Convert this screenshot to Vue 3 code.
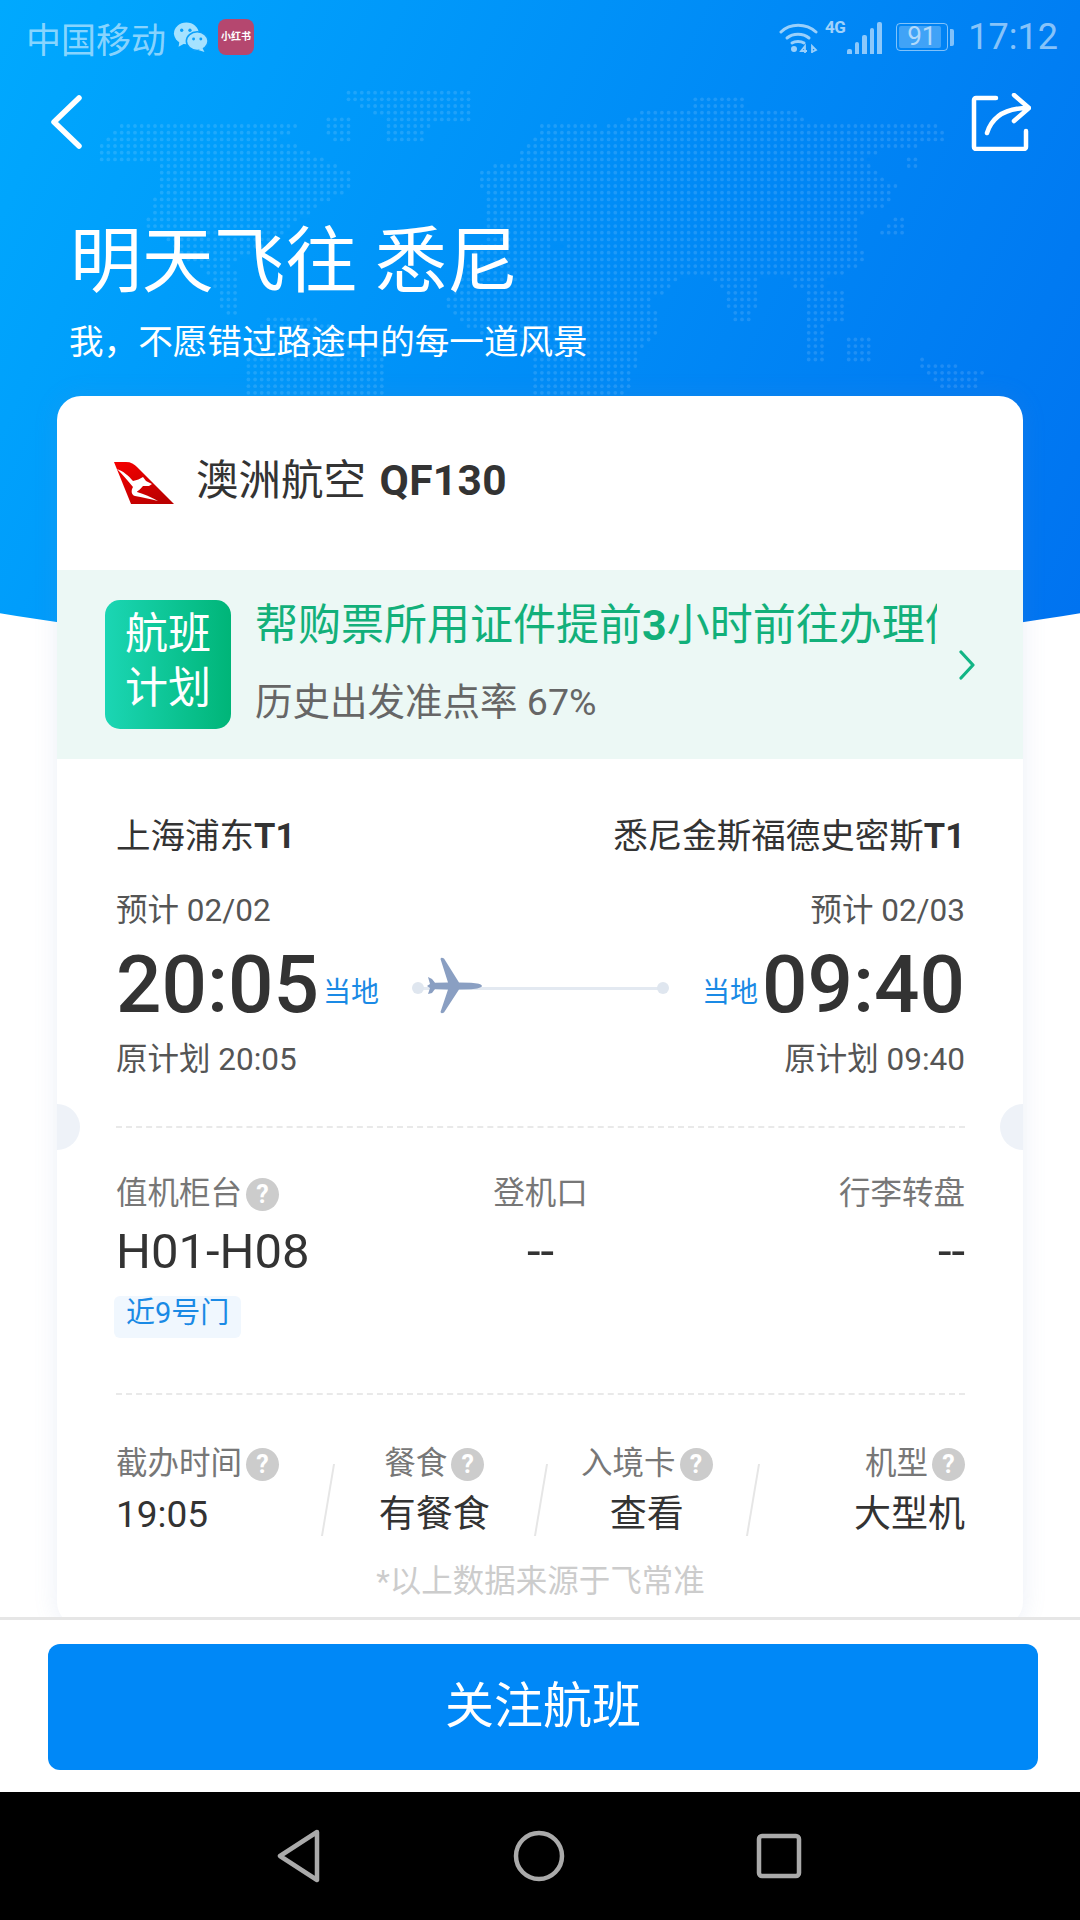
<template>
  <div class="page">
    <main class="main">
      <div class="hero-bg">
        <svg class="world" width="1080" height="400" viewBox="0 0 1080 400">
          <circle v-for="(d, i) in mapDots" :key="i" :cx="d[0]" :cy="d[1]" r="1.9" fill="#fff" fill-opacity="0.12" />
        </svg>
      </div>

      <div class="status">
        <div class="status-left">
          <span class="carrier">中国移动</span>
          <svg class="wechat" width="36" height="31" viewBox="0 0 34 30">
            <ellipse cx="12.5" cy="11" rx="12" ry="10.5" fill="#a5e2ff" />
            <path d="M6 18l-1 6 7-4z" fill="#a5e2ff" />
            <ellipse cx="23" cy="18.5" rx="10.5" ry="9" fill="#a5e2ff" stroke="#0aa0fb" stroke-width="1.5" />
            <path d="M28 25l2 4-6-2z" fill="#a5e2ff" />
            <circle cx="8" cy="8" r="1.6" fill="#0aa0fb" /><circle cx="16" cy="8" r="1.6" fill="#0aa0fb" />
            <circle cx="19.5" cy="16.5" r="1.4" fill="#0aa0fb" /><circle cx="26.5" cy="16.5" r="1.4" fill="#0aa0fb" />
          </svg>
          <span class="xhs">小红书</span>
        </div>
        <div class="status-right">
          <svg class="wifi" width="40" height="34" viewBox="0 0 40 34">
            <g fill="none" stroke="#fff" stroke-opacity="0.6" stroke-width="3" stroke-linecap="round">
              <path d="M2 12C11 3 27 3 37 12" /><path d="M8 18c6-5 16-5 22 0" /><path d="M13 23c3-2 9-2 12 0" />
            </g>
            <circle cx="15" cy="29" r="3" fill="#fff" fill-opacity="0.6" />
            <path d="M26 33v-7l-4 5h6M33 33v-7l4 4-4 2" fill="none" stroke="#fff" stroke-opacity="0.6" stroke-width="1.8" />
          </svg>
          <div class="signal">
            <span class="net">4G</span>
            <i v-for="h in signalBars" :key="h" class="bar" :style="{ height: h + 'px' }"></i>
          </div>
          <div class="battery">
            <div class="battery-box"><div class="battery-fill"></div><span class="battery-num">91</span></div>
            <i class="battery-knob"></i>
          </div>
          <span class="clock">17:12</span>
        </div>
      </div>

      <nav class="topnav">
        <svg width="34" height="56" viewBox="0 0 34 56">
          <path d="M30 4L5 28l25 24" fill="none" stroke="#fff" stroke-width="5.5" stroke-linecap="round" stroke-linejoin="round" />
        </svg>
        <svg width="60" height="58" viewBox="0 0 60 58">
          <path d="M25 5H5a2 2 0 0 0-2 2v47a2 2 0 0 0 2 2h48a2 2 0 0 0 2-2V38" fill="none" stroke="#fff" stroke-width="4.5" stroke-linecap="round" />
          <path d="M16 40C21 24 34 15 57 15M43 2l15 13-15 13" fill="none" stroke="#fff" stroke-width="4.5" stroke-linecap="round" stroke-linejoin="round" />
        </svg>
      </nav>

      <h1 class="title">明天飞往 悉尼</h1>
      <p class="subtitle">我，不愿错过路途中的每一道风景</p>

      <section class="card">
        <div class="airline">
          <svg width="62" height="44" viewBox="0 0 62 44">
            <defs>
              <linearGradient id="tail" x1="0" y1="0" x2="0.7" y2="1">
                <stop offset="0" stop-color="#f60000" />
                <stop offset="1" stop-color="#bb0000" />
              </linearGradient>
            </defs>
            <path d="M1 1h12c5 0 8 2 11 5l37 37H18z" fill="url(#tail)" />
            <path d="M4 8C10 10 16 15 20 20 24 19 27 18 30 16L33 20 39 23 36 25 30 25C27 29 24 30 24 31 31 33 38 36 45 40 37 38 29 36 22 35 18 34 18 29 20 26 15 20 10 14 4 8Z" fill="#fff" />
          </svg>
          <span class="airline-name">澳洲航空 <b>QF130</b></span>
        </div>

        <div class="plan">
          <div class="plan-tag">航班<br />计划</div>
          <div class="plan-text">
            <div class="plan-tip">帮购票所用证件提前<b>3</b>小时前往办理值机手续</div>
            <div class="plan-rate">历史出发准点率 67%</div>
          </div>
          <svg class="plan-arrow" width="16" height="30" viewBox="0 0 16 30">
            <path d="M2 2l12 13L2 28" fill="none" stroke="#12b585" stroke-width="3.2" stroke-linecap="round" stroke-linejoin="round" />
          </svg>
        </div>

        <div class="body">
          <div class="section flight">
            <div class="between route">
              <span>上海浦东<b>T1</b></span>
              <span>悉尼金斯福德史密斯<b>T1</b></span>
            </div>
            <div class="between expect">
              <span>预计 02/02</span>
              <span>预计 02/03</span>
            </div>
            <div class="times">
              <span class="time">20:05</span>
              <span class="local">当地</span>
              <div class="track">
                <svg class="plane" width="56" height="58" viewBox="0 0 56 58">
                  <path d="M55 29C55 27.5 50 26 44 25.8L32 25.5 17 1.5Q14 0 13.5 2L21 25.5 8 25.8 5 22 1 20 3 27 0 29 3 31 1 37 5 36 8 32 21 32.5 13.5 55Q14 57 17 55.5L32 32.5 44 32.2C50 32 55 30.5 55 29Z" fill="#8a9fc2" />
                </svg>
              </div>
              <span class="local">当地</span>
              <span class="time">09:40</span>
            </div>
            <div class="between planned">
              <span>原计划 20:05</span>
              <span>原计划 09:40</span>
            </div>
            <i class="notch notch-l"></i>
            <i class="notch notch-r"></i>
          </div>

          <div class="section counters">
            <div class="counter-col">
              <div class="label">值机柜台<span class="help">?</span></div>
              <div class="big">H01-H08</div>
              <span class="gate-tag">近9号门</span>
            </div>
            <div class="counter-col center">
              <div class="label">登机口</div>
              <div class="big">--</div>
            </div>
            <div class="counter-col right">
              <div class="label">行李转盘</div>
              <div class="big">--</div>
            </div>
          </div>

          <div class="facts">
            <template v-for="(f, i) in facts" :key="f.label">
              <i v-if="i > 0" class="slash"></i>
              <div class="fact" :class="f.align">
                <div class="label">{{ f.label }}<span class="help">?</span></div>
                <div class="fact-value">{{ f.value }}</div>
              </div>
            </template>
          </div>

          <p class="source">*以上数据来源于飞常准</p>
        </div>
      </section>
    </main>

    <footer class="footer">
      <button class="follow">关注航班</button>
    </footer>

    <div class="sysnav">
      <svg width="46" height="54" viewBox="0 0 46 54">
        <path d="M41 3L4 27l37 24z" fill="none" stroke="#aaa" stroke-width="4.5" stroke-linejoin="round" />
      </svg>
      <svg width="52" height="52" viewBox="0 0 52 52">
        <circle cx="26" cy="26" r="23" fill="none" stroke="#aaa" stroke-width="4.5" />
      </svg>
      <svg width="46" height="46" viewBox="0 0 46 46">
        <rect x="3" y="3" width="40" height="40" rx="3" fill="none" stroke="#aaa" stroke-width="4.5" />
      </svg>
    </div>
  </div>
</template>

<script setup>
const signalBars = [5, 12, 19, 26, 32]

const facts = [
  { label: '截办时间', value: '19:05', align: 'left' },
  { label: '餐食', value: '有餐食', align: 'center' },
  { label: '入境卡', value: '查看', align: 'center' },
  { label: '机型', value: '大型机', align: 'right' }
]

// rough continents, dots are laid on a grid inside them
const lands = [
  [[98,143],[129,120],[300,120],[294,130],[274,140],[310,150],[356,175],[351,190],[320,205],[294,225],[279,240],[232,262],[240,290],[222,285],[181,255],[145,225],[155,195],[160,160],[98,160]],
  [[344,87],[470,87],[470,120],[434,120],[420,146],[385,146],[385,120],[344,100]],
  [[325,115],[354,115],[354,145],[330,145]],
  [[212,280],[238,285],[238,320],[222,310]],
  [[268,313],[307,313],[387,355],[387,396],[248,396],[248,350]],
  [[485,215],[480,170],[516,160],[529,142],[545,122],[592,122],[602,128],[630,118],[643,112],[695,112],[695,96],[742,96],[747,112],[799,112],[809,120],[938,125],[949,135],[943,142],[892,150],[864,155],[871,170],[897,185],[887,205],[861,215],[857,240],[867,258],[845,275],[825,275],[823,292],[792,292],[789,275],[762,275],[754,320],[733,325],[718,280],[684,275],[658,270],[540,240],[485,240]],
  [[444,300],[485,235],[643,260],[684,275],[653,300],[662,330],[643,350],[625,396],[535,396],[527,345],[465,330]],
  [[806,290],[843,290],[843,320],[806,320]],
  [[806,325],[825,325],[825,365],[806,365]],
  [[845,335],[870,335],[875,365],[845,365]],
  [[915,357],[985,372],[975,392],[935,385]],
  [[905,155],[922,155],[922,170],[905,170]],
  [[895,215],[905,215],[905,235],[880,235]]
]

const inside = (x, y, poly) => {
  let hit = false
  for (let i = 0, j = poly.length - 1; i < poly.length; j = i++) {
    const [xi, yi] = poly[i]
    const [xj, yj] = poly[j]
    if ((yi > y) !== (yj > y) && x < ((xj - xi) * (y - yi)) / (yj - yi) + xi) hit = !hit
  }
  return hit
}

const mapDots = []
for (let y = 86; y < 398; y += 6.67) {
  for (let x = 95; x < 990; x += 6.67) {
    if (lands.some((p) => inside(x, y, p))) mapDots.push([x.toFixed(1), y.toFixed(1)])
  }
}
</script>

<style scoped>
.page {
  width: 1080px;
  height: 1920px;
  display: flex;
  flex-direction: column;
  overflow: hidden;
  background: #fff;
  font-family: Roboto, "Noto Sans CJK SC", sans-serif;
  color: #333;
}

.main {
  position: relative;
  height: 1617px;
  overflow: hidden;
}

.hero-bg {
  position: absolute;
  top: 0;
  left: 0;
  width: 1080px;
  height: 660px;
  background: linear-gradient(115deg, #00a9fe 0%, #0072f0 100%);
  clip-path: ellipse(1504px 657px at 540px 0);
}

.world {
  position: absolute;
  top: 0;
  left: 0;
}

.status,
.topnav,
.title,
.subtitle,
.card {
  position: relative;
}

.status {
  height: 74px;
  display: flex;
  justify-content: space-between;
  align-items: center;
  padding: 0 22px 0 26px;
  color: rgba(255, 255, 255, 0.55);
}

.status-left,
.status-right {
  display: flex;
  align-items: center;
}

.carrier {
  font-size: 35px;
}

.wechat {
  margin-left: 7px;
}

.xhs {
  width: 36px;
  height: 36px;
  margin-left: 9px;
  border-radius: 8px;
  background: #b5476f;
  color: #fff;
  font-size: 10px;
  font-weight: 700;
  line-height: 36px;
  text-align: center;
  white-space: nowrap;
}

.signal {
  display: flex;
  align-items: flex-end;
  gap: 3px;
  height: 34px;
  margin-left: 6.5px;
}

.net {
  align-self: flex-start;
  font-size: 17px;
  font-weight: 700;
  line-height: 15px;
  letter-spacing: -0.5px;
  margin-right: -1px;
  color: rgba(255, 255, 255, 0.65);
}

.bar {
  width: 4.5px;
  background: rgba(255, 255, 255, 0.55);
  border-radius: 2px 2px 0 0;
}

.battery {
  display: flex;
  align-items: center;
  margin-left: 14px;
}

.battery-box {
  position: relative;
  width: 52px;
  height: 28px;
  box-sizing: border-box;
  padding: 2px;
  border: 1.5px solid rgba(255, 255, 255, 0.5);
  border-radius: 4px;
  display: flex;
}

.battery-fill {
  width: 91%;
  background: rgba(255, 255, 255, 0.25);
  border-radius: 2px;
}

.battery-num {
  position: absolute;
  inset: 0;
  text-align: center;
  font-size: 26px;
  line-height: 25px;
  color: rgba(255, 255, 255, 0.6);
}

.battery-knob {
  width: 4px;
  height: 17px;
  margin-left: 2px;
  background: rgba(255, 255, 255, 0.5);
  border-radius: 0 2px 2px 0;
}

.clock {
  margin-left: 14.5px;
  font-size: 36px;
}

.topnav {
  height: 96px;
  display: flex;
  justify-content: space-between;
  align-items: center;
  padding: 0 49px 0 49px;
  margin-bottom: 47px;
}

.title {
  margin: 0 0 10px 70px;
  font-size: 71.8px;
  font-weight: 400;
  line-height: 90px;
  color: #fff;
}

.subtitle {
  margin: 0 0 29px 69px;
  font-size: 34.6px;
  line-height: 50px;
  color: #fff;
}

.card {
  width: 966px;
  margin-left: 57px;
  padding-bottom: 24px;
  background: #fff;
  border-radius: 24px;
  box-shadow: 0 0 24px rgba(110, 140, 200, 0.14);
  overflow: hidden;
}

.airline {
  height: 174px;
  display: flex;
  align-items: center;
  padding-left: 56px;
}

.airline-name {
  margin: 0 0 14px 21px;
  font-size: 42.5px;
}

.airline-name b {
  margin-left: 3px;
  font-weight: 700;
  letter-spacing: 0.3px;
}

.plan {
  height: 189px;
  display: flex;
  align-items: center;
  padding: 0 48px;
  background: #ecf8f5;
}

.plan-tag {
  flex: none;
  width: 126px;
  height: 129px;
  border-radius: 15px;
  background: linear-gradient(90deg, #1bd6b4, #00b578);
  color: #fff;
  font-size: 43px;
  line-height: 54px;
  text-align: center;
  padding-top: 7px;
  box-sizing: border-box;
}

.plan-text {
  width: 683px;
  margin-left: 24px;
  overflow: hidden;
}

.plan-tip {
  font-size: 43px;
  line-height: 50px;
  color: #12b07a;
  white-space: nowrap;
  margin-top: -3px;
}

.plan-tip b {
  font-weight: 700;
}

.plan-rate {
  margin-top: 27px;
  font-size: 37.5px;
  line-height: 50px;
  color: #666;
}

.plan-arrow {
  margin-left: 22px;
}

.body {
  padding: 0 58px 0 59px;
}

.section {
  position: relative;
}

.flight {
  padding: 55px 0 46px;
  border-bottom: 2px dashed #e9e9e9;
}

.between {
  display: flex;
  justify-content: space-between;
}

.route {
  font-size: 34.5px;
  line-height: 44px;
}

.route b {
  font-weight: 700;
}

.expect {
  margin-top: 33px;
  font-size: 31.5px;
  line-height: 40px;
  color: #555;
}

.times {
  display: flex;
  align-items: baseline;
  margin-top: 9px;
  height: 90px;
}

.time {
  font-size: 80px;
  font-weight: 500;
  line-height: 90px;
}

.local {
  align-self: center;
  margin: 16px 4px 0;
  font-size: 28px;
  line-height: 40px;
  color: #1a8ae5;
}

.track {
  position: relative;
  flex: 1;
  align-self: center;
  height: 3px;
  margin: 6px 35px 0 35px;
  background: #e3e9f1;
}

.track::before,
.track::after {
  content: "";
  position: absolute;
  top: -5px;
  width: 12px;
  height: 12px;
  border-radius: 50%;
  background: #dfe6ef;
}

.track::before {
  left: -6px;
}

.track::after {
  right: -6px;
}

.plane {
  position: absolute;
  top: -30px;
  left: 9px;
}

.planned {
  margin-top: 10px;
  font-size: 31.5px;
  line-height: 40px;
  color: #555;
}

.notch {
  position: absolute;
  bottom: -24px;
  width: 46px;
  height: 46px;
  border-radius: 50%;
  background: #eef2f8;
}

.notch-l {
  left: -82px;
}

.notch-r {
  right: -81px;
}

.counters {
  display: flex;
  justify-content: space-between;
  padding: 46px 0 55px;
  border-bottom: 2px dashed #e9e9e9;
}

.counter-col {
  flex: 1;
  display: flex;
  flex-direction: column;
  align-items: flex-start;
}

.counter-col.center {
  align-items: center;
}

.counter-col.right {
  align-items: flex-end;
}

.label {
  display: flex;
  align-items: center;
  font-size: 31.5px;
  line-height: 40px;
  color: #777;
}

.help {
  width: 33px;
  height: 33px;
  margin-left: 4px;
  border-radius: 50%;
  background: #ccc;
  color: #fff;
  font-size: 25px;
  font-weight: 700;
  line-height: 33px;
  text-align: center;
}

.big {
  margin-top: 8px;
  font-size: 49px;
  line-height: 60px;
}

.gate-tag {
  margin: 14px 0 0 -2px;
  height: 42px;
  padding: 0 12px;
  border-radius: 6px;
  background: #f0f7fe;
  color: #1a8ae5;
  font-size: 29px;
  line-height: 34px;
}

.facts {
  display: flex;
  align-items: center;
  padding-top: 49px;
}

.fact {
  flex: 1;
  display: flex;
  flex-direction: column;
}

.fact.left {
  align-items: flex-start;
}

.fact.center {
  align-items: center;
}

.fact.right {
  align-items: flex-end;
}

.fact-value {
  margin-top: 6px;
  font-size: 37px;
  line-height: 50px;
}

.slash {
  flex: none;
  width: 1.5px;
  height: 72px;
  margin-top: 16px;
  background: #e6e6e6;
  transform: skewX(-9.5deg);
}

.source {
  margin: 22px 0 0;
  font-size: 31.5px;
  line-height: 40px;
  color: #ccc;
  text-align: center;
}

.footer {
  flex: none;
  height: 175px;
  box-sizing: border-box;
  border-top: 3px solid #e6e6e6;
  padding: 24px 42px 0 48px;
  background: #fff;
}

.follow {
  display: block;
  width: 100%;
  height: 126px;
  padding: 0 0 12px;
  border: none;
  border-radius: 12px;
  background: #0088f7;
  color: #fff;
  font-family: inherit;
  font-size: 49px;
}

.sysnav {
  flex: 1;
  display: flex;
  align-items: center;
  background: #000;
  padding-left: 276px;
  gap: 191px;
}
</style>
